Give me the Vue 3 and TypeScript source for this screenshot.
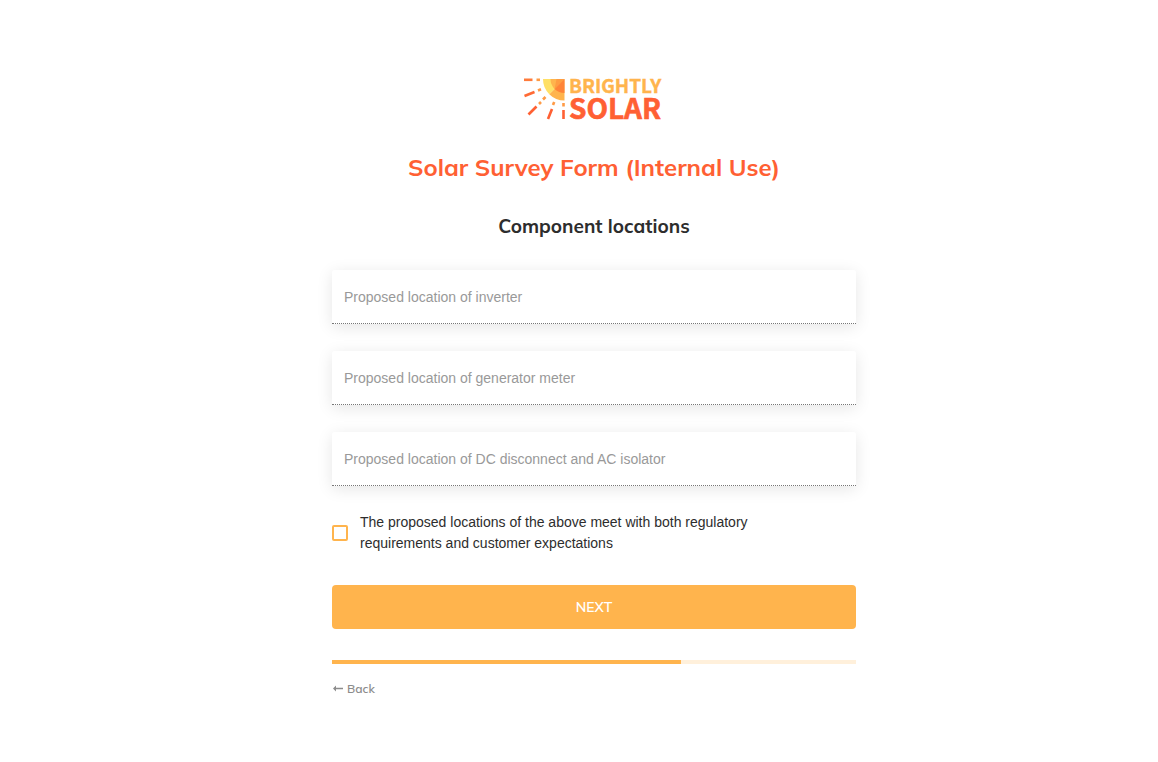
<script setup lang="ts">
import { ref } from 'vue'

interface Field {
  id: string
  label: string
}

const fields: Field[] = [
  { id: 'inverter', label: 'Proposed location of inverter' },
  { id: 'meter', label: 'Proposed location of generator meter' },
  { id: 'isolator', label: 'Proposed location of DC disconnect and AC isolator' },
]

const values = ref<Record<string, string>>({ inverter: '', meter: '', isolator: '' })
const confirmed = ref(false)
const step = 2
const steps = 3
</script>

<template>
  <main class="page">
    <form class="survey" @submit.prevent>
      <svg class="logo" viewBox="0 0 144 48" role="img" aria-label="Brightly Solar">
        <path d="M42.500 4H21a21.500 21.500 0 0 0 6.300 15.200z" fill="#ffe066" />
        <path d="M42.500 4L27.300 19.200A21.500 21.500 0 0 0 42.500 25.500z" fill="#ffb44d" />
        <path d="M42.500 4h-14a14 14 0 0 0 4.100 9.900z" fill="#ffb44d" />
        <path d="M42.500 4h-8l-1.900 9.900z" fill="#ff9d42" />
        <path d="M42.500 4L32.600 13.900A14 14 0 0 0 42.500 18z" fill="#ff8438" />
        <g fill="none" stroke-width="2.600">
          <path d="M2 4.800h8.500" stroke="#ff7a3a" />
          <path d="M14.500 4.800H18" stroke="#ff9a45" />
          <path d="M2.500 21l10-4" stroke="#ff6a35" />
          <path d="M16 15.500l3-1.200" stroke="#ff9a45" />
          <path d="M6.500 39.500l8-8" stroke="#ff6033" />
          <path d="M17 29l2-2M21 24.500l2.500-2.500" stroke="#ff9a45" />
          <path d="M26 44l4-10" stroke="#ff6033" />
          <path d="M31 30l1.200-3" stroke="#ff9a45" />
          <path d="M41.500 35v9" stroke="#ff6033" />
          <path d="M41.500 28v3.500" stroke="#ff9a45" />
        </g>
        <text class="brand-top" x="47" y="18">BRIGHTLY</text>
        <text class="brand-bottom" x="47" y="44">SOLAR</text>
      </svg>

      <h1>Solar Survey Form (Internal Use)</h1>
      <h2>Component locations</h2>

      <div class="fields">
        <input
          v-for="field in fields"
          :id="field.id"
          :key="field.id"
          v-model="values[field.id]"
          class="field"
          type="text"
          :aria-label="field.label"
          :placeholder="field.label"
        />
      </div>

      <label class="confirm" for="confirm">
        <input id="confirm" v-model="confirmed" type="checkbox" />
        <span>The proposed locations of the above meet with both regulatory requirements and customer expectations</span>
      </label>

      <button class="next" type="submit">NEXT</button>

      <div class="track" role="progressbar" aria-label="Progress" :aria-valuenow="step" aria-valuemin="0" :aria-valuemax="steps">
        <div class="bar" :style="{ width: (step / steps) * 100 + '%' }"></div>
      </div>

      <a class="back" href="#">
        <svg viewBox="0 0 12 8" aria-hidden="true">
          <path d="M1 3.500l3-3v2.300h7v1.400H4v2.300z" />
        </svg>
        Back
      </a>
    </form>
  </main>
</template>

<style>
body {
  background: #fff;
}
</style>

<style scoped>
.page {
  display: flex;
  justify-content: center;
  padding: 75px 16px 60px 46px;
  font-family: "Liberation Sans", Arial, sans-serif;
  color: #2d2d2d;
}

.survey {
  display: flex;
  flex-direction: column;
  width: 100%;
  max-width: 524px;
}

.logo {
  display: block;
  width: 144px;
  height: 48px;
  align-self: center;
  overflow: visible;
}

.brand-top,
.brand-bottom {
  font-family: "Noto Sans CJK SC", "Noto Sans", sans-serif;
  font-weight: 700;
}

.brand-top {
  font-size: 19px;
  fill: #ffb44d;
  stroke: #ffb44d;
  stroke-width: 0.4;
}

.brand-bottom {
  font-size: 28px;
  fill: #ff6033;
  stroke: #ff6033;
  stroke-width: 0.6;
}

h1,
h2 {
  margin: 0;
  font-family: Mulish, Lato, sans-serif;
  font-weight: 700;
  text-align: center;
}

h1 {
  margin-top: 28px;
  font-size: 24px;
  line-height: 32px;
  color: #ff6033;
}

h2 {
  margin-top: 31px;
  font-size: 19px;
  line-height: 24px;
}

.fields {
  display: grid;
  gap: 27px;
  margin-top: 32px;
}

.field {
  box-sizing: border-box;
  width: 100%;
  height: 54px;
  padding: 0 12px;
  border: 0;
  border-bottom: 1px dotted #777;
  border-radius: 2px 2px 0 0;
  background: #fff;
  box-shadow: 0 3px 16px rgba(0, 0, 0, 0.1);
  font: inherit;
  font-size: 14px;
  color: inherit;
}

.field::placeholder {
  color: #999;
  opacity: 1;
}

.confirm {
  display: flex;
  align-items: center;
  gap: 12px;
  margin-top: 26px;
  padding-right: 60px;
  font-size: 14px;
  line-height: 21px;
}

.confirm input {
  flex: none;
  appearance: none;
  width: 16px;
  height: 16px;
  margin: 0;
  border: 2px solid #ffb44d;
  border-radius: 2px;
}

.confirm input:checked {
  background: #ffb44d;
}

.next {
  height: 44px;
  margin-top: 31px;
  border: 0;
  border-radius: 4px;
  background: #ffb44d;
  color: #fff;
  font-family: Mulish, Lato, sans-serif;
  font-size: 14px;
  font-weight: 600;
}

.track {
  height: 4px;
  margin-top: 31px;
  background: #fff0db;
}

.bar {
  height: 100%;
  background: #ffb44d;
}

.back {
  display: flex;
  align-items: center;
  align-self: flex-start;
  gap: 3px;
  margin-top: 17px;
  font-family: Mulish, Lato, sans-serif;
  font-size: 12px;
  font-weight: 600;
  line-height: 16px;
  color: #8c8c8c;
  text-decoration: none;
}

.back svg {
  width: 12px;
  height: 8px;
  fill: currentColor;
}
</style>
